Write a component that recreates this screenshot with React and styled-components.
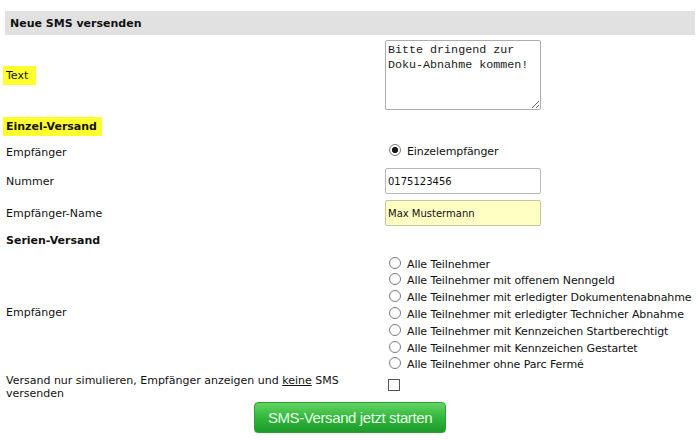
import styled, { createGlobalStyle } from "styled-components";

const GlobalStyle = createGlobalStyle`
  html, body {
    margin: 0;
    background: #fff;
  }
  body {
    font-family: "DejaVu Sans", Verdana, sans-serif;
    font-size: 11px;
    color: #111;
  }
`;

const Page = styled.div`
  width: 690px;
  padding: 11px 5px 0;
`;

const Header = styled.h2`
  margin: 0;
  height: 24px;
  padding: 0 5px;
  display: flex;
  align-items: center;
  background: #e1e1e1;
  font-size: 11px;
  font-weight: bold;
`;

const Form = styled.div`
  display: grid;
  grid-template-columns: 380px 1fr;
  padding-top: 2px;
`;

const Label = styled.div`
  min-height: ${(p) => p.$h}px;
  display: flex;
  align-items: center;
  padding-left: 1px;
  line-height: 13px;
  font-weight: ${(p) => (p.$bold ? "bold" : "normal")};
`;

const Field = styled.div`
  min-height: ${(p) => p.$h}px;
  display: flex;
  align-items: center;
`;

const Marker = styled.span`
  background: #ffff2e;
  padding: 3px ${(p) => p.$pr}px 3px 3px;
  margin-left: -3px;
`;

const TextArea = styled.textarea`
  box-sizing: border-box;
  width: 156px;
  height: 70px;
  margin: 0;
  padding: 2px 2px;
  border: 1px solid #adadad;
  border-radius: 2px;
  font-family: "Liberation Mono", "Courier New", monospace;
  font-size: 11.7px;
  line-height: 15px;
  color: #1a1a1a;
  overflow: hidden;
`;

const TextInput = styled.input`
  box-sizing: border-box;
  width: 156px;
  height: 26px;
  margin: 0;
  padding: 0 2px;
  border: 1px solid ${(p) => (p.$focus ? "#c5c5a0" : "#b8b8b8")};
  border-radius: 2px;
  background: ${(p) => (p.$focus ? "#ffffc4" : "#fff")};
  font-family: "DejaVu Sans", Verdana, sans-serif;
  font-size: 10px;
  color: #111;
  outline: none;
`;

const RadioList = styled.div`
  display: flex;
  flex-direction: column;
  padding-top: 4px;
`;

const Option = styled.label`
  height: 16.8px;
  display: flex;
  align-items: center;
  gap: 6px;
  padding-left: 4px;
  white-space: nowrap;
  letter-spacing: -0.1px;
`;

const Radio = styled.input.attrs({ type: "radio" })`
  appearance: none;
  flex: none;
  box-sizing: border-box;
  width: 12px;
  height: 12px;
  margin: -3px 0 0;
  border: 1px solid #7a7a7a;
  border-radius: 50%;
  background: #fff;
  &:checked {
    background: radial-gradient(circle, #1a1a1a 0 2.8px, #fff 3.4px);
  }
`;

const Check = styled.input.attrs({ type: "checkbox" })`
  appearance: none;
  box-sizing: border-box;
  width: 12px;
  height: 12px;
  margin: -4px 0 0 3px;
  border: 1px solid #555;
  background: #fff;
`;

const Actions = styled.div`
  grid-column: 1 / -1;
  display: flex;
  justify-content: center;
  padding-top: 2px;
`;

const StartButton = styled.button`
  width: 192px;
  height: 31px;
  border: 1px solid #2c9f33;
  border-radius: 4px;
  background: linear-gradient(#63d463, #2fb43a 55%, #1d9b2a);
  color: #eafbe8;
  font-family: "Liberation Sans", Arial, sans-serif;
  font-size: 15px;
  letter-spacing: -0.4px;
  box-shadow: 0 1px 1px rgba(0, 0, 0, 0.15);
`;

const serien = [
  "Alle Teilnehmer",
  "Alle Teilnehmer mit offenem Nenngeld",
  "Alle Teilnehmer mit erledigter Dokumentenabnahme",
  "Alle Teilnehmer mit erledigter Technicher Abnahme",
  "Alle Teilnehmer mit Kennzeichen Startberechtigt",
  "Alle Teilnehmer mit Kennzeichen Gestartet",
  "Alle Teilnehmer ohne Parc Fermé",
];

export default function App() {
  return (
    <>
      <GlobalStyle />
      <Page>
        <Header>Neue SMS versenden</Header>
        <Form>
          <Label $h={76}>
            <Marker $pr={8}>Text</Marker>
          </Label>
          <Field $h={76}>
            <TextArea
              defaultValue={"Bitte dringend zur\nDoku-Abnahme kommen!"}
            />
          </Field>

          <Label $h={26} $bold>
            <Marker $pr={5}>Einzel-Versand</Marker>
          </Label>
          <Field $h={26} />

          <Label $h={26}>Empfänger</Label>
          <Field $h={26}>
            <Option>
              <Radio name="einzel" defaultChecked />
              Einzelempfänger
            </Option>
          </Field>

          <Label $h={32}>Nummer</Label>
          <Field $h={32}>
            <TextInput defaultValue="0175123456" />
          </Field>

          <Label $h={32}>Empfänger-Name</Label>
          <Field $h={32}>
            <TextInput $focus defaultValue="Max Mustermann" />
          </Field>

          <Label $h={22} $bold>
            Serien-Versand
          </Label>
          <Field $h={22} />

          <Label $h={123}>Empfänger</Label>
          <Field $h={123}>
            <RadioList>
              {serien.map((s) => (
                <Option key={s}>
                  <Radio name="serien" />
                  {s}
                </Option>
              ))}
            </RadioList>
          </Field>

          <Label $h={26}>
            <span>
              Versand nur simulieren, Empfänger anzeigen und <u>keine</u> SMS
              versenden
            </span>
          </Label>
          <Field $h={26}>
            <Check />
          </Field>

          <Actions>
            <StartButton>SMS-Versand jetzt starten</StartButton>
          </Actions>
        </Form>
      </Page>
    </>
  );
}
